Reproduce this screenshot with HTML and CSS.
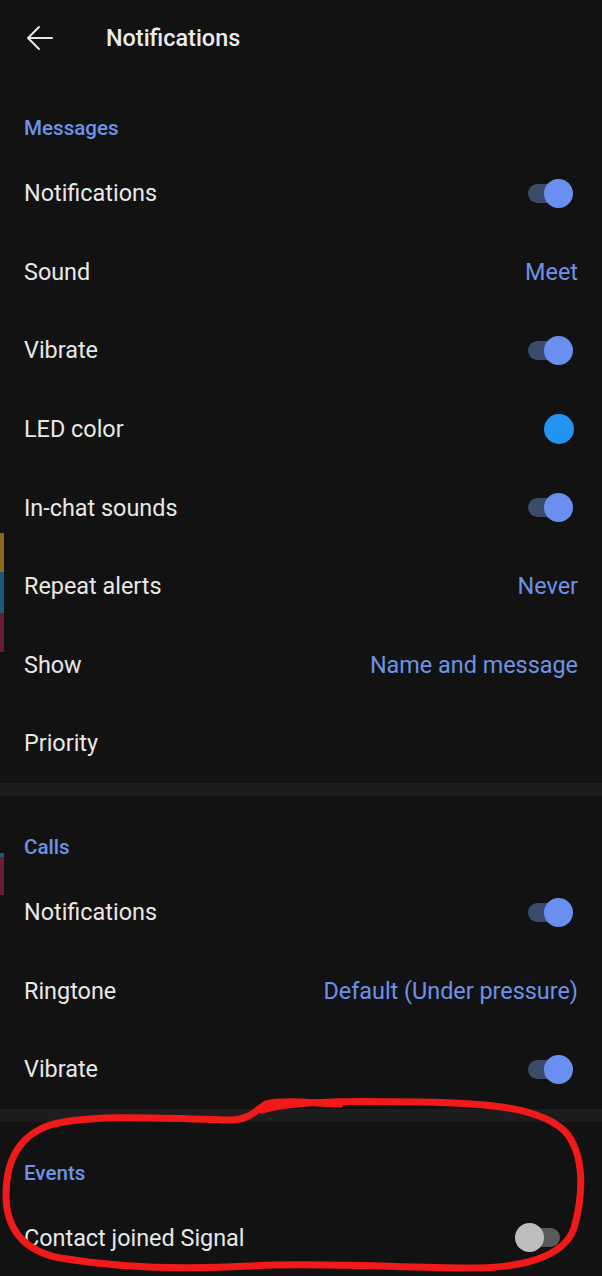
FILE: index.html
```html
<!DOCTYPE html>
<html lang="en">
<head>
<meta charset="utf-8">
<title>Notifications</title>
<link rel="stylesheet" href="styles.css">
</head>
<body>
<div class="screen">
  <header class="topbar">
    <svg class="back" width="28" height="26" viewBox="0 0 28 26" aria-hidden="true">
      <path d="M26 13H3M13 2L2 13l11 11" fill="none" stroke="#e6e6e6" stroke-width="2" stroke-linecap="round" stroke-linejoin="round"/>
    </svg>
    <h1 class="title">Notifications</h1>
  </header>

  <section class="group">
    <h2 class="group-title">Messages</h2>
    <div class="row"><span class="label">Notifications</span><span class="toggle on"><span class="track"></span><span class="thumb"></span></span></div>
    <div class="row"><span class="label">Sound</span><span class="value">Meet</span></div>
    <div class="row"><span class="label">Vibrate</span><span class="toggle on"><span class="track"></span><span class="thumb"></span></span></div>
    <div class="row"><span class="label">LED color</span><span class="led"></span></div>
    <div class="row"><span class="label">In-chat sounds</span><span class="toggle on"><span class="track"></span><span class="thumb"></span></span></div>
    <div class="row"><span class="label">Repeat alerts</span><span class="value">Never</span></div>
    <div class="row"><span class="label">Show</span><span class="value">Name and message</span></div>
    <div class="row"><span class="label">Priority</span></div>
  </section>

  <div class="divider"></div>

  <section class="group">
    <h2 class="group-title">Calls</h2>
    <div class="row"><span class="label">Notifications</span><span class="toggle on"><span class="track"></span><span class="thumb"></span></span></div>
    <div class="row"><span class="label">Ringtone</span><span class="value">Default (Under pressure)</span></div>
    <div class="row"><span class="label">Vibrate</span><span class="toggle on"><span class="track"></span><span class="thumb"></span></span></div>
  </section>

  <div class="divider"></div>

  <section class="group">
    <h2 class="group-title">Events</h2>
    <div class="row"><span class="label">Contact joined Signal</span><span class="toggle off"><span class="track"></span><span class="thumb"></span></span></div>
  </section>

  <div class="strip s1"></div>
  <div class="strip s2"></div>
  <div class="strip s3"></div>
  <div class="strip s4"></div>
  <div class="strip s5"></div>

  <svg class="scribble" width="602" height="1276" viewBox="0 0 602 1276" aria-hidden="true">
    <path d="M262 1110 C 300 1100, 360 1101, 420 1102 C 480 1103, 545 1106, 568 1135 C 586 1160, 582 1200, 574 1228 C 564 1258, 520 1268, 470 1268 C 400 1268, 320 1262, 250 1266 C 180 1270, 120 1268, 60 1258 C 20 1250, 6 1225, 6 1195 C 6 1160, 20 1135, 50 1125 C 90 1114, 160 1118, 230 1120 C 250 1120, 256 1110, 266 1104 C 286 1099, 320 1104, 340 1104" fill="none" stroke="#f01a1a" stroke-width="7" stroke-linecap="round" stroke-linejoin="round"/>
  </svg>
</div>
</body>
</html>
```

FILE: styles.css
```css
* { box-sizing: border-box; }
html, body {
  margin: 0;
  padding: 0;
  background: #121212;
}
body {
  font-family: Roboto, "Noto Sans", "Liberation Sans", sans-serif;
  color: #e6e6e6;
  width: 602px;
  height: 1276px;
  overflow: hidden;
}
.screen {
  position: relative;
  width: 602px;
  height: 1276px;
  overflow: hidden;
}
.topbar {
  height: 75px;
  display: flex;
  align-items: center;
  padding-left: 26px;
}
.back { display: block; }
.title {
  margin: 0 0 0 52px;
  font-size: 23.4px;
  font-weight: 500;
  color: #ececec;
  line-height: 26px;
}
.group { display: flex; flex-direction: column; }
.group-title {
  margin: 0;
  padding: 41px 24px 14px;
  font-size: 20.6px;
  line-height: 24px;
  font-weight: 500;
  color: #6d93e8;
}
.divider + .group .group-title { padding-top: 39px; }
.row {
  height: 78.6px;
  display: flex;
  align-items: center;
  justify-content: space-between;
  padding: 0 24px;
}
.label {
  font-size: 23.4px;
  line-height: 28px;
  color: #e8e8e8;
}
.value {
  font-size: 23.4px;
  line-height: 28px;
  color: #6d93e8;
}
.divider {
  height: 13px;
  background: #1d1d1d;
}
.led {
  width: 30px;
  height: 30px;
  border-radius: 50%;
  background: #2394f0;
  margin-right: 4px;
}
.toggle {
  position: relative;
  height: 29px;
}
.toggle .track {
  position: absolute;
  top: 5px;
  height: 19px;
  border-radius: 10px;
}
.toggle .thumb {
  position: absolute;
  top: 0;
  width: 29px;
  height: 29px;
  border-radius: 50%;
}
.toggle.on { width: 45px; margin-right: 5px; }
.toggle.on .track { left: 0; width: 38px; background: #3c4b6a; }
.toggle.on .thumb { right: 0; background: #6a8ff0; }
.toggle.off { width: 45px; margin-right: 18px; }
.toggle.off .track { right: 0; width: 34px; background: #5a5a5a; }
.toggle.off .thumb { left: 0; background: #bdbdbd; }

.strip {
  position: absolute;
  left: 0;
  width: 4px;
}
.s1 { top: 533px; height: 39px; background: #8a6a1c; }
.s2 { top: 572px; height: 41px; background: #1d5876; }
.s3 { top: 613px; height: 39px; background: #6a1c36; }
.s4 { top: 853px; height: 4px; background: #1d5876; }
.s5 { top: 857px; height: 38px; background: #6a1c36; }

.scribble {
  position: absolute;
  left: 0;
  top: 0;
  pointer-events: none;
}
```
